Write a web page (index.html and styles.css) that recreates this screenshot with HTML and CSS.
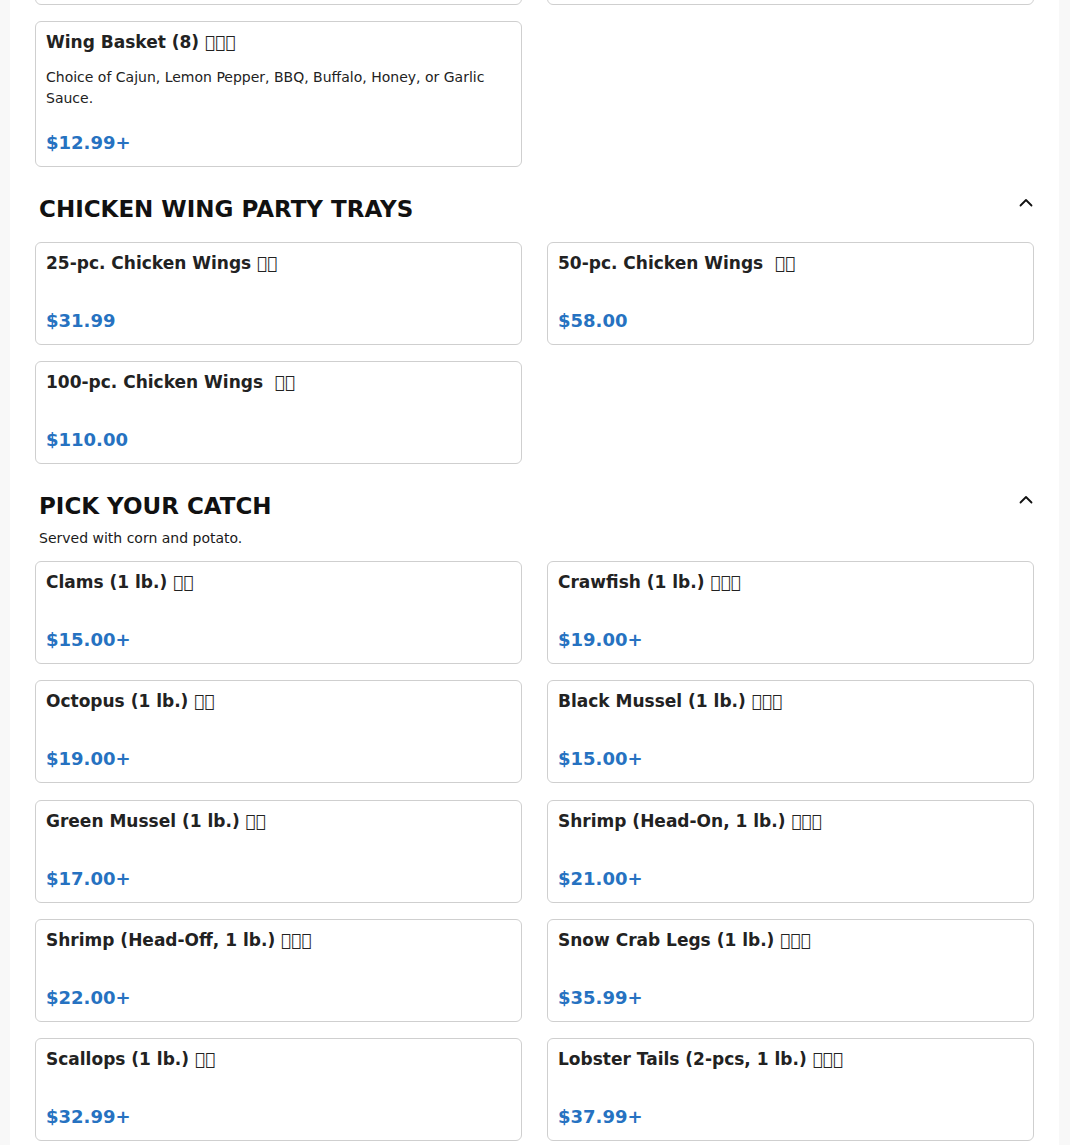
FILE: index.html
```html
<!DOCTYPE html>
<html lang="en">
<head>
<meta charset="utf-8">
<title>Menu</title>
<link rel="stylesheet" href="styles.css">
</head>
<body>
<main class="menu">
  <section class="section section-first">
    <div class="grid">
      <div class="card card-cut"></div>
      <div class="card card-cut"></div>
      <div class="card">
        <h3 class="item-title">Wing Basket (8) <span class="zh">&#xE000;&#xE001;&#xE002;</span></h3>
        <p class="item-desc">Choice of Cajun, Lemon Pepper, BBQ, Buffalo, Honey, or Garlic Sauce.</p>
        <div class="item-price">$12.99+</div>
      </div>
    </div>
  </section>

  <section class="section">
    <div class="section-head">
      <h2 class="section-title">CHICKEN WING PARTY TRAYS</h2>
      <svg class="chevron" viewBox="0 0 16 16" width="16" height="16" aria-hidden="true"><polyline points="2.5,11.5 8,6 13.5,11.5" fill="none" stroke="#111" stroke-width="1.8" stroke-linecap="round" stroke-linejoin="round"/></svg>
    </div>
    <div class="grid">
      <div class="card">
        <h3 class="item-title">25-pc. Chicken Wings <span class="zh">&#xE000;&#xE001;</span></h3>
        <div class="item-price">$31.99</div>
      </div>
      <div class="card">
        <h3 class="item-title">50-pc. Chicken Wings&nbsp; <span class="zh">&#xE000;&#xE001;</span></h3>
        <div class="item-price">$58.00</div>
      </div>
      <div class="card">
        <h3 class="item-title">100-pc. Chicken Wings&nbsp; <span class="zh">&#xE000;&#xE001;</span></h3>
        <div class="item-price">$110.00</div>
      </div>
    </div>
  </section>

  <section class="section">
    <div class="section-head has-sub">
      <h2 class="section-title">PICK YOUR CATCH</h2>
      <svg class="chevron" viewBox="0 0 16 16" width="16" height="16" aria-hidden="true"><polyline points="2.5,11.5 8,6 13.5,11.5" fill="none" stroke="#111" stroke-width="1.8" stroke-linecap="round" stroke-linejoin="round"/></svg>
    </div>
    <p class="section-sub">Served with corn and potato.</p>
    <div class="grid grid-catch">
      <div class="card">
        <h3 class="item-title">Clams (1 lb.) <span class="zh">&#xE000;&#xE001;</span></h3>
        <div class="item-price">$15.00+</div>
      </div>
      <div class="card">
        <h3 class="item-title">Crawfish (1 lb.) <span class="zh">&#xE000;&#xE001;&#xE002;</span></h3>
        <div class="item-price">$19.00+</div>
      </div>
      <div class="card">
        <h3 class="item-title">Octopus (1 lb.) <span class="zh">&#xE000;&#xE001;</span></h3>
        <div class="item-price">$19.00+</div>
      </div>
      <div class="card">
        <h3 class="item-title">Black Mussel (1 lb.) <span class="zh">&#xE000;&#xE001;&#xE002;</span></h3>
        <div class="item-price">$15.00+</div>
      </div>
      <div class="card">
        <h3 class="item-title">Green Mussel (1 lb.) <span class="zh">&#xE000;&#xE001;</span></h3>
        <div class="item-price">$17.00+</div>
      </div>
      <div class="card">
        <h3 class="item-title">Shrimp (Head-On, 1 lb.) <span class="zh">&#xE000;&#xE001;&#xE002;</span></h3>
        <div class="item-price">$21.00+</div>
      </div>
      <div class="card">
        <h3 class="item-title">Shrimp (Head-Off, 1 lb.) <span class="zh">&#xE000;&#xE001;&#xE002;</span></h3>
        <div class="item-price">$22.00+</div>
      </div>
      <div class="card">
        <h3 class="item-title">Snow Crab Legs (1 lb.) <span class="zh">&#xE000;&#xE001;&#xE002;</span></h3>
        <div class="item-price">$35.99+</div>
      </div>
      <div class="card">
        <h3 class="item-title">Scallops (1 lb.) <span class="zh">&#xE000;&#xE001;</span></h3>
        <div class="item-price">$32.99+</div>
      </div>
      <div class="card">
        <h3 class="item-title">Lobster Tails (2-pcs, 1 lb.) <span class="zh">&#xE000;&#xE001;&#xE002;</span></h3>
        <div class="item-price">$37.99+</div>
      </div>
    </div>
  </section>
</main>
</body>
</html>
```

FILE: styles.css
```css
* { box-sizing: border-box; }

html, body {
  margin: 0;
  padding: 0;
}

body {
  background: #f8f8f8;
  font-family: "DejaVu Sans", sans-serif;
  color: #212121;
}

.menu {
  margin: -98px 0 0 10px;
  width: 1049px;
  background: #ffffff;
  padding: 0 25px 40px 25px;
}

.section {
  padding-top: 27px;
}

.section-first {
  padding-top: 0;
}

.grid {
  display: grid;
  grid-template-columns: 1fr 1fr;
  column-gap: 25px;
  row-gap: 16px;
}

.grid-catch {
  row-gap: 16.3px;
}

.card {
  display: flex;
  flex-direction: column;
  border: 1px solid #cfcfcf;
  border-radius: 6px;
  padding: 8px 10px 10px 10px;
  background: #fff;
}

.card-cut {
  height: 103px;
}

.item-title {
  margin: 0;
  font-size: 17px;
  line-height: 24px;
  font-weight: bold;
  color: #222222;
}

.zh {
  font-family: "DejaVu Sans";
}

.item-desc {
  margin: 13px 0 0 0;
  font-size: 14px;
  line-height: 21px;
  color: #222222;
}

.item-price {
  margin-top: 32px;
  font-size: 18px;
  line-height: 27px;
  font-weight: bold;
  color: #2672c1;
}

.item-desc + .item-price {
  margin-top: 20px;
}

.section-head {
  display: flex;
  justify-content: space-between;
  align-items: flex-start;
  padding-left: 4px;
  margin-bottom: 18px;
}

.section-head.has-sub {
  margin-bottom: 7px;
}

.section-title {
  margin: 0;
  font-size: 23px;
  line-height: 30px;
  font-weight: bold;
  color: #111111;
}

.chevron {
  display: block;
  flex: none;
}

.section-sub {
  margin: 0 0 12px 0;
  padding-left: 4px;
  font-size: 14px;
  line-height: 21px;
  color: #1a1a1a;
}
```
